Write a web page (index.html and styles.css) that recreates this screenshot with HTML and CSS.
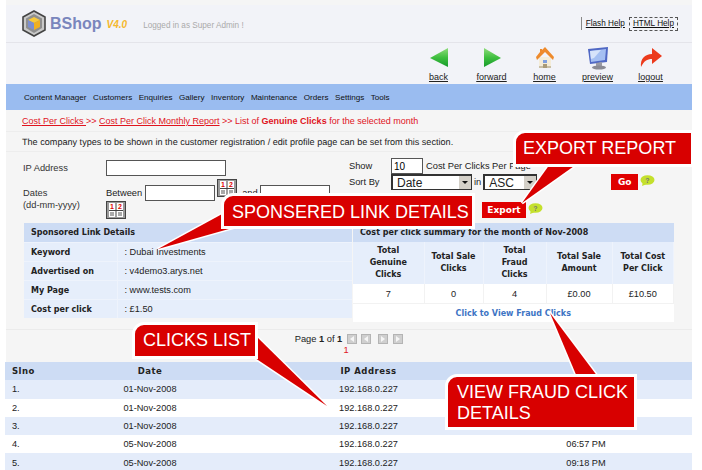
FILE: index.html
```html
<!DOCTYPE html>
<html lang="en">
<head>
    <meta charset="UTF-8">
    <meta name="viewport" content="width=device-width, initial-scale=1.0">
    <title>BShop - Genuine Clicks</title>
    <link rel="stylesheet" href="styles.css">
</head>
<body>
    <div class="frame">
        <header class="top">
            <svg class="logo" width="24" height="27" viewBox="0 0 24 27">
                <polygon points="12,1 23,7 23,20 12,26 1,20 1,7" fill="#c9c9c9" stroke="#444" stroke-width="1.6"/>
                <polygon points="12,4 20,8.5 20,18 12,23 4,18 4,8.5" fill="#8f8f8f"/>
                <polygon points="12,7 18,10 12,13 6,10" fill="#f7c93b"/>
                <polygon points="6,10 12,13 12,20 6,17" fill="#7d8fd0"/>
                <polygon points="18,10 12,13 12,20 18,17" fill="#f0b020"/>
            </svg>
            <span class="brand">BShop</span>
            <span class="version">V4.0</span>
            <span class="logged">Logged in as Super Admin !</span>
            <div class="help">
                <a href="#" class="help-flash">Flash Help</a>
                <a href="#" class="help-html">HTML Help</a>
            </div>
        </header>

        <div class="tools">
            <a href="#" class="tool">
                <svg width="22" height="23" viewBox="0 0 22 23">
                    <defs>
                        <linearGradient id="green-a" x1="0" y1="0" x2="0" y2="1">
                            <stop offset="0" stop-color="#8fdc7c"/>
                            <stop offset="0.5" stop-color="#3fbf3f"/>
                            <stop offset="1" stop-color="#169a2b"/>
                        </linearGradient>
                    </defs>
                    <polygon points="2,11 20,1 20,20" fill="url(#green-a)"/>
                </svg>
                <span>back</span>
            </a>
            <a href="#" class="tool">
                <svg width="22" height="23" viewBox="0 0 22 23">
                    <polygon points="3,1 20,11 3,20" fill="url(#green-a)"/>
                </svg>
                <span>forward</span>
            </a>
            <a href="#" class="tool">
                <svg width="22" height="23" viewBox="0 0 22 23">
                    <polygon points="5,10 17,10 17,21 5,21" fill="#f4ecd8"/>
                    <rect x="5" y="19" width="12" height="2" fill="#c9bfa5"/>
                    <rect x="9" y="13" width="4" height="3" fill="#7f9fe0"/>
                    <rect x="9" y="17" width="4" height="4" fill="#a89a78"/>
                    <polygon points="11,0 20,10 19,13 11,5 3,13 2,10 6,5 6,2 8,2 8,3" fill="#ee8a2c"/>
                </svg>
                <span>home</span>
            </a>
            <a href="#" class="tool">
                <svg width="22" height="23" viewBox="0 0 22 23">
                    <polygon points="1,2 21,0 20,15 3,17" fill="#5068c4"/>
                    <polygon points="3,4 19,2 18,13 4,15" fill="#a5bff2"/>
                    <polygon points="3,4 14,3 7,11 4,12" fill="#d7e3fa"/>
                    <polygon points="9,16 15,15 15,19 9,19" fill="#9a9aa5"/>
                    <ellipse cx="12" cy="20.5" rx="7" ry="2" fill="#8a8a94"/>
                </svg>
                <span>preview</span>
            </a>
            <a href="#" class="tool">
                <svg width="24" height="23" viewBox="0 0 24 23">
                    <path d="M2 20 C1 12 6 7 13 7 L13 1 L23 9 L13 17 L13 12 C8 12 5 14 2 20 Z" fill="#ec3a1c"/>
                </svg>
                <span>logout</span>
            </a>
        </div>

        <nav class="menu">
            <a href="#">Content Manager</a>
            <a href="#">Customers</a>
            <a href="#">Enquiries</a>
            <a href="#">Gallery</a>
            <a href="#">Inventory</a>
            <a href="#">Maintenance</a>
            <a href="#">Orders</a>
            <a href="#">Settings</a>
            <a href="#">Tools</a>
        </nav>

        <p class="crumbs"><a href="#">Cost Per Clicks </a> &gt;&gt; <a href="#">Cost Per Click Monthly Report</a> &gt;&gt; List of <b>Genuine Clicks</b> for the selected month</p>
        <p class="intro">The company types to be shown in the customer registration / edit profile page can be set from this section.</p>

        <form class="filter">
            <div class="filter-left">
                <div class="ip-row">
                    <label class="label">IP Address</label>
                    <input type="text" class="field field-ip">
                </div>
                <div class="date-row">
                    <label class="label label-dates">Dates<br>(dd-mm-yyyy)</label>
                    <div class="date-fields">
                        <span>Between</span>
                        <input type="text" class="field field-date">
                        <svg class="cal cal-first" width="20" height="18" viewBox="0 0 20 18">
                            <rect x="0.5" y="0.5" width="19" height="17" fill="#9a9a9a" stroke="#444"/>
                            <rect x="3" y="2" width="14" height="14" fill="#fff"/>
                            <rect x="3" y="9" width="14" height="1" fill="#444"/>
                            <rect x="9.5" y="2" width="1" height="14" fill="#444"/>
                            <text x="6" y="8" class="cal-num">1</text>
                            <text x="14" y="8" class="cal-num">2</text>
                            <path d="M4 12h4M4 14h4M12 12h4M12 14h4" stroke="#555"/>
                        </svg>
                        <span class="and">and</span>
                        <input type="text" class="field field-date">
                        <svg class="cal" width="20" height="18" viewBox="0 0 20 18">
                            <rect x="0.5" y="0.5" width="19" height="17" fill="#9a9a9a" stroke="#444"/>
                            <rect x="3" y="2" width="14" height="14" fill="#fff"/>
                            <rect x="3" y="9" width="14" height="1" fill="#444"/>
                            <rect x="9.5" y="2" width="1" height="14" fill="#444"/>
                            <text x="6" y="8" class="cal-num">1</text>
                            <text x="14" y="8" class="cal-num">2</text>
                            <path d="M4 12h4M4 14h4M12 12h4M12 14h4" stroke="#555"/>
                        </svg>
                    </div>
                </div>
            </div>
            <div class="filter-right">
                <div class="show-row">
                    <span class="label-short">Show</span>
                    <input type="text" class="field field-show" value="10">
                    <span>Cost Per Clicks Per Page</span>
                </div>
                <div class="sort-row">
                    <span class="label-short">Sort By</span>
                    <div class="pick pick-sort">Date<i class="pick-btn"></i></div>
                    <span class="in">in</span>
                    <div class="pick pick-order">ASC<i class="pick-btn"></i></div>
                    <button type="button" class="btn btn-go">Go</button>
                    <svg class="hint" width="15" height="11" viewBox="0 0 15 11">
                        <ellipse cx="7.5" cy="5" rx="7" ry="4.8" fill="#c4e02c"/>
                        <polygon points="3,7 2,11 7,9" fill="#c4e02c"/>
                        <text x="7.5" y="8" text-anchor="middle" class="hint-mark">?</text>
                    </svg>
                </div>
                <div class="export-row">
                    <button type="button" class="btn btn-export">Export</button>
                    <svg class="hint" width="15" height="11" viewBox="0 0 15 11">
                        <ellipse cx="7.5" cy="5" rx="7" ry="4.8" fill="#c4e02c"/>
                        <polygon points="3,7 2,11 7,9" fill="#c4e02c"/>
                        <text x="7.5" y="8" text-anchor="middle" class="hint-mark">?</text>
                    </svg>
                </div>
            </div>
        </form>

        <div class="summary">
            <table class="details">
                <tr><th colspan="2" class="head">Sponsored Link Details</th></tr>
                <tr><th>Keyword</th><td>: Dubai Investments</td></tr>
                <tr><th>Advertised on</th><td>: v4demo3.arys.net</td></tr>
                <tr><th>My Page</th><td>: www.tests.com</td></tr>
                <tr><th>Cost per click</th><td>: £1.50</td></tr>
            </table>
            <table class="totals">
                <colgroup>
                    <col class="t-genuine"><col class="t-sale"><col class="t-fraud"><col class="t-amount"><col>
                </colgroup>
                <tr><th colspan="5" class="head">Cost per click summary for the month of Nov-2008</th></tr>
                <tr class="totals-cols">
                    <th>Total<br>Genuine<br>Clicks</th>
                    <th>Total Sale<br>Clicks</th>
                    <th>Total<br>Fraud<br>Clicks</th>
                    <th>Total Sale<br>Amount</th>
                    <th>Total Cost<br>Per Click</th>
                </tr>
                <tr class="totals-vals"><td>7</td><td>0</td><td>4</td><td>£0.00</td><td>£10.50</td></tr>
                <tr><td colspan="5" class="fraud-link"><a href="#">Click to View Fraud Clicks</a></td></tr>
            </table>
        </div>

        <div class="pager">
            <div class="pager-line">
                <span>Page <b>1</b> of <b>1</b></span>
                <svg width="56" height="10" viewBox="0 0 56 10">
                    <g fill="#cfcfcf" stroke="#b4b4b4">
                        <rect x="0.5" y="0.5" width="9" height="9"/>
                        <rect x="14.5" y="0.5" width="9" height="9"/>
                        <rect x="31.5" y="0.5" width="9" height="9"/>
                        <rect x="46.5" y="0.5" width="9" height="9"/>
                    </g>
                    <g fill="#f6f6f6">
                        <polygon points="7,2 3,5 7,8"/>
                        <polygon points="21,2 17,5 21,8"/>
                        <polygon points="34,2 38,5 34,8"/>
                        <polygon points="49,2 53,5 49,8"/>
                    </g>
                </svg>
            </div>
            <div class="pager-num">1</div>
        </div>

        <table class="clicks">
            <colgroup>
                <col class="c-no"><col class="c-date"><col class="c-ip"><col class="c-time"><col>
            </colgroup>
            <tr class="clicks-head"><th class="no">Slno</th><th>Date</th><th>IP Address</th><th></th><th></th></tr>
            <tr class="odd"><td class="no">1.</td><td>01-Nov-2008</td><td>192.168.0.227</td><td></td><td></td></tr>
            <tr><td class="no">2.</td><td>01-Nov-2008</td><td>192.168.0.227</td><td></td><td></td></tr>
            <tr class="odd"><td class="no">3.</td><td>01-Nov-2008</td><td>192.168.0.227</td><td></td><td></td></tr>
            <tr><td class="no">4.</td><td>05-Nov-2008</td><td>192.168.0.227</td><td>06:57 PM</td><td></td></tr>
            <tr class="odd"><td class="no">5.</td><td>05-Nov-2008</td><td>192.168.0.227</td><td>09:18 PM</td><td></td></tr>
        </table>
    </div>

    <!-- red annotations drawn over the page -->
    <svg class="tails" width="702" height="470" viewBox="0 0 702 470">
        <polygon points="550,164 577,164 522,203"/>
        <polygon points="224,213 236,227 158,249"/>
        <polygon points="255,335 255,358 327,406"/>
        <polygon points="577,377 598,377 550,313"/>
    </svg>
    <div class="note note-export">EXPORT REPORT</div>
    <div class="note note-link">SPONSERED LINK DETAILS</div>
    <div class="note note-clicks">CLICKS LIST</div>
    <div class="note note-fraud">VIEW FRAUD CLICK<br>DETAILS</div>
</body>
</html>
```

FILE: styles.css
```css
html, body { margin: 0; padding: 0; }
body { position: relative; width: 702px; height: 470px; overflow: hidden; background: #fff; font-family: "Liberation Sans", Arial, sans-serif; font-size: 9.3px; color: #222; }
a { color: inherit; }

.frame { box-sizing: border-box; width: 686px; height: 470px; margin-left: 6px; padding-top: 5px; background: #f5f5f5; }

/* header */
.top { display: flex; align-items: center; height: 37px; padding: 0 14px 0 16px; background: #f2f3f8; border-bottom: 1px solid #e4e4ea; }
.logo { margin-right: 4px; }
.brand { font-size: 16px; font-weight: bold; color: #7a86bd; }
.version { margin: 2px 0 0 5px; font-size: 10px; font-weight: bold; font-style: italic; color: #f5b82e; }
.logged { margin: 4px 0 0 16px; color: #aaa; font-size: 8.2px; }
.help { display: flex; align-items: center; margin-left: auto; color: #111; font-size: 8.2px; }
.help-flash { padding-left: 4px; border-left: 1px solid #888; line-height: 13px; }
.help-html { margin-left: 4px; padding: 0 3px; border: 1px dashed #555; line-height: 12px; }

.tools { display: flex; justify-content: flex-end; height: 41px; padding-right: 15px; background: #f2f3f8; }
.tool { display: flex; flex-direction: column; align-items: center; width: 53px; padding-top: 4px; font-size: 9px; color: #222; }
.tool svg { display: block; }
.tool span { margin-top: 2px; text-decoration: underline; }

.menu { display: flex; align-items: center; gap: 6.5px; height: 26px; padding-left: 18px; background: #9abcf0; font-size: 8.1px; }
.menu a { text-decoration: none; color: #111; }

.crumbs { margin: 0; height: 21px; padding-left: 16px; font-size: 9px; line-height: 22px; color: #e0141e; border-bottom: 1px solid #ededed; }
.intro { margin: 0; height: 19px; padding-left: 16px; font-size: 9.1px; text-rendering: geometricPrecision; line-height: 20px; border-bottom: 1px solid #ededed; }

/* filter form */
.filter { display: flex; height: 71px; padding-left: 17px; }
.filter-left { width: 326px; }
.filter-right { flex: 1; }
.ip-row { display: flex; align-items: center; padding-top: 8px; }
.label { width: 83px; color: #333; }
.field { box-sizing: border-box; margin: 0; height: 16px; padding: 0 2px; background: #fff; border: 1px solid #555; font: 10px "Liberation Sans", Arial, sans-serif; }
.field-ip { width: 120px; }
.field-date { width: 70px; }
.field-show { width: 32px; margin-right: 3px; }
.date-row { display: flex; padding-top: 3px; }
.label-dates { padding-top: 8px; line-height: 12px; }
.date-fields { display: flex; flex-wrap: wrap; align-items: center; width: 240px; }
.date-fields span { margin-right: 3px; margin-top: 6px; }
.date-fields .field { margin-top: 6px; }
.cal-first { margin-left: 2px; align-self: flex-start; }
.cal-num { font-size: 7px; font-weight: bold; fill: #e00000; text-anchor: middle; }
.date-fields .and { margin: 6px 2px 0 5px; }
.show-row { display: flex; align-items: center; padding-top: 6px; }
.label-short { width: 42px; }
.sort-row { display: flex; align-items: center; height: 16px; }
.pick { display: flex; align-items: center; justify-content: space-between; box-sizing: border-box; height: 16px; padding-left: 4px; background: #fff; border: 1px solid #333; border-width: 2px 1px 1px 2px; font-size: 12px; }
.pick-sort { width: 81px; }
.pick-order { width: 54px; }
.pick-btn { width: 12px; height: 13px; background: #d4d0c8; position: relative; }
.pick-btn::after { content: ""; position: absolute; left: 3px; top: 5px; border: 3px solid transparent; border-top-color: #111; }
.in { margin: 0 2px 0 2px; }
.btn { margin: 0; border: 0; background: #e00000; color: #fff; font-family: "DejaVu Sans", Verdana, sans-serif; font-size: 9px; font-weight: bold; height: 16px; padding: 0; }
.btn-go { width: 27px; margin-left: 74px; }
.btn-export { width: 44px; margin-left: 133px; }
.hint { margin: -4px 0 0 2px; }
.hint-mark { font-size: 7px; font-weight: bold; fill: #777; }
.export-row { display: flex; align-items: center; padding-top: 12px; }

/* summary tables */
.summary { display: flex; gap: 1px; padding-left: 18px; height: 106px; border-bottom: 1px solid #ebebeb; }
table { border-collapse: collapse; }
.summary th, .summary td { padding: 0; font-size: 9.2px; }
.summary th { font-family: "DejaVu Sans", Verdana, sans-serif; font-size: 8px; color: #222; }
.summary .head { height: 19px; padding-left: 7px; background: #cddcf4; text-align: left; }
.details { width: 328px; height: 95px; background: #e6eefb; align-self: flex-start; }
.details tr + tr { border-top: 1px solid #eef3fc; }
.details tr > th:not(.head) { width: 93px; padding-left: 7px; box-sizing: border-box; text-align: left; border-right: 1px solid #eef3fc; }
.details td { padding-left: 7px; }
.totals { width: 321px; height: 99px; background: #fff; table-layout: fixed; align-self: flex-start; }
.t-genuine { width: 71px; }
.t-sale { width: 59px; }
.t-fraud { width: 63px; }
.t-amount { width: 66px; }
.totals-cols th { height: 42px; line-height: 12px; background: #e6eefb; border-right: 1px solid #eef3fc; }
.totals-vals td { height: 19px; text-align: center; border-right: 1px solid #f2f2f2; border-bottom: 1px solid #f2f2f2; }
.summary .fraud-link { text-align: center; font-family: "DejaVu Sans", Verdana, sans-serif; font-size: 8px; font-weight: bold; }
.fraud-link a { color: #3d74c4; text-decoration: none; }

/* pager */
.pager { height: 32px; padding-top: 4px; box-sizing: border-box; text-align: center; }
.pager-line { display: flex; justify-content: center; align-items: center; gap: 5px; }
.pager-num { padding: 1px 6px 0 0; color: #e0141e; line-height: 11px; }

/* clicks list */
.clicks { width: 687px; margin-left: -1px; table-layout: fixed; }
.clicks th, .clicks td { height: 18.3px; padding: 0; text-align: center; font-size: 9.2px; }
.clicks-head th { background: #cddcf4; font-family: "DejaVu Sans", Verdana, sans-serif; font-size: 8.5px; letter-spacing: 0.5px; }
.clicks tr { background: #fff; }
.clicks tr.odd { background: #e4ecfa; }
.clicks .no { padding-left: 7px; text-align: left; }
.c-no { width: 90px; }
.c-date { width: 110px; }
.c-ip { width: 327px; }
.c-time { width: 108px; }

/* annotations */
.tails { position: absolute; left: 0; top: 0; pointer-events: none; }
.tails polygon { fill: #d80000; stroke: #fff; stroke-width: 3; paint-order: stroke; }
.note { position: absolute; box-sizing: border-box; background: #d80000; color: #fff; border: 3px solid #fff; border-top-left-radius: 12px; font-size: 18px; line-height: 20px; white-space: nowrap; }
.note-export { left: 513px; top: 130px; width: 181px; height: 37px; padding: 5px 0 0 7px; }
.note-link { left: 221px; top: 193px; width: 254px; height: 36px; padding: 6px 0 0 8px; }
.note-clicks { left: 132px; top: 322px; width: 126px; height: 37px; padding: 5px 0 0 8px; }
.note-fraud { left: 445px; top: 374px; width: 192px; height: 56px; padding: 5px 0 0 9px; line-height: 21px; }
```
